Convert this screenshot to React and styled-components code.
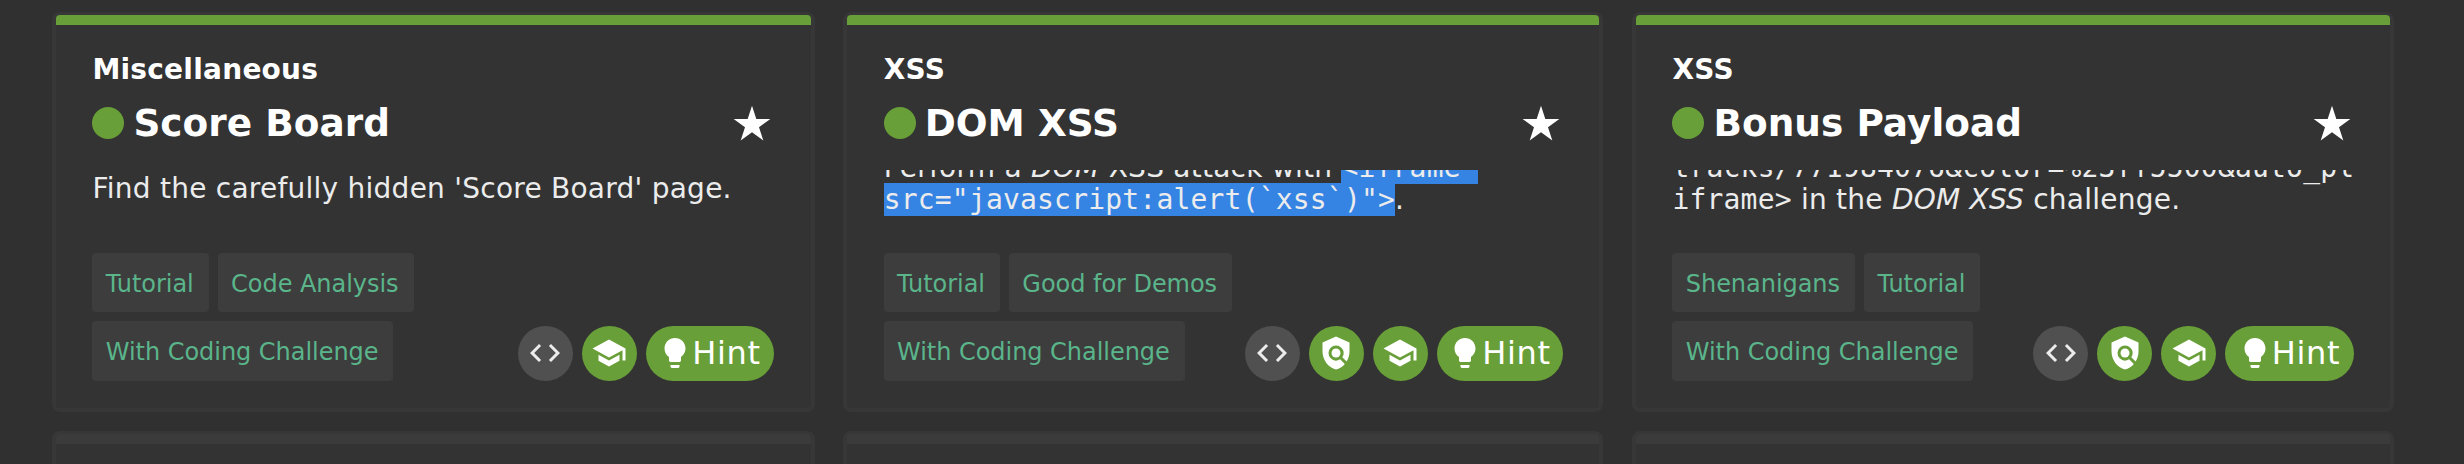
import React from "react";
import styled, { createGlobalStyle } from "styled-components";
import { MdCode, MdLightbulb, MdPolicy, MdSchool } from "react-icons/md";

const GlobalStyle = createGlobalStyle`
  * { box-sizing: border-box; }
  body {
    margin: 0;
    height: 464px;
    overflow: hidden;
    background: #303030;
    color: #fff;
    font-family: "DejaVu Sans", sans-serif;
  }
`;

const Grid = styled.main`
  display: grid;
  grid-template-columns: 762.5px 760px 762px;
  grid-template-rows: 400px 400px;
  column-gap: 28.75px;
  row-gap: 19px;
  padding: 12px 0 0 52px;
  height: 464px;
  overflow: hidden;
`;

const Card = styled.article`
  display: flex;
  flex-direction: column;
  border: 4px solid #373737;
  border-top-width: 3px;
  border-radius: 8px;
  background: #333;
`;

const StatusBar = styled.div`
  flex: none;
  height: ${(p) => (p.$solved ? "9.5px" : "10px")};
  border-radius: 4px 4px 0 0;
  background: ${(p) => (p.$solved ? "#689f38" : "#3b3b3b")};
`;

const Content = styled.div`
  display: flex;
  flex-direction: column;
  flex: 1;
  padding: 28.5px 36.3px 27.5px 36.4px;
`;

const Category = styled.div`
  height: 33px;
  font-size: 28px;
  font-weight: 700;
  line-height: 33px;
  letter-spacing: 0.25px;
`;

const TitleRow = styled.div`
  display: flex;
  align-items: center;
  gap: 9px;
  height: 44px;
  margin-top: 15px;
`;

const Dot = styled.span`
  width: 32px;
  height: 32px;
  border-radius: 50%;
  background: #689f38;
`;

const Title = styled.h2`
  flex: 1;
  margin: 0;
  font-size: 37.4px;
  line-height: 44px;
  letter-spacing: 0.05px;
`;

const Star = styled.svg`
  width: 44px;
  height: 44px;
  margin-top: 1px;
  fill: #fff;
`;

const Description = styled.div`
  display: flex;
  flex-direction: column;
  justify-content: ${(p) => (p.$scrolled ? "flex-end" : "flex-start")};
  height: 46px;
  margin-top: 25px;
  padding-top: ${(p) => (p.$scrolled ? 0 : "3px")};
  overflow: hidden;
  color: #ececec;
  font-size: 28px;
  line-height: 32px;
  letter-spacing: 0.25px;
  white-space: nowrap;
`;

const Line = styled.div`
  flex: none;
  height: 32px;
`;

const Code = styled.code`
  font-family: "DejaVu Sans Mono", monospace;
  font-size: 28px;
  letter-spacing: 0.19px;
`;

const Selected = styled(Code)`
  background: #3584e4;
`;

const Footer = styled.div`
  display: flex;
  align-items: flex-end;
  justify-content: space-between;
  margin-top: auto;
`;

const Tags = styled.div`
  display: flex;
  flex-wrap: wrap;
  gap: 9px;
  width: 365px;
`;

const Tag = styled.span`
  height: 59.5px;
  padding: 0 15px 0 13.4px;
  border-radius: 4px;
  background: #3d3d3d;
  color: #5ab58b;
  font-size: 24px;
  line-height: 62px;
  letter-spacing: -0.04px;
  white-space: nowrap;
`;

const Badges = styled.div`
  display: flex;
  gap: 9px;
`;

const Badge = styled.span`
  display: flex;
  align-items: center;
  justify-content: center;
  width: 55px;
  height: 55px;
  border-radius: 28px;
  background: ${(p) => (p.$muted ? "#505050" : "#689f38")};
  color: ${(p) => (p.$muted ? "#ececec" : "#fff")};
`;

const HintBadge = styled(Badge)`
  width: ${(p) => p.$width}px;
  padding-right: 2px;
  font-size: 32px;
  letter-spacing: 0.7px;

  svg {
    flex: none;
    margin-right: -1px;
  }
`;

const cards = [
  {
    category: "Miscellaneous",
    title: "Score Board",
    tags: ["Tutorial", "Code Analysis", "With Coding Challenge"],
    hintWidth: 128.5,
    description: <Line>Find the carefully hidden 'Score Board' page.</Line>,
  },
  {
    category: "XSS",
    title: "DOM XSS",
    tags: ["Tutorial", "Good for Demos", "With Coding Challenge"],
    policy: true,
    scrolled: true,
    hintWidth: 126,
    description: (
      <>
        <Line>
          Perform a <em>DOM</em> XSS attack with <Selected>&lt;iframe&nbsp;</Selected>
        </Line>
        <Line>
          <Selected>src="javascript:alert(`xss`)"&gt;</Selected>.
        </Line>
      </>
    ),
  },
  {
    category: "XSS",
    title: "Bonus Payload",
    tags: ["Shenanigans", "Tutorial", "With Coding Challenge"],
    policy: true,
    scrolled: true,
    hintWidth: 128.5,
    description: (
      <>
        <Line>
          <Code>tracks/771984076&amp;color=%23ff5500&amp;auto_pl</Code>
        </Line>
        <Line>
          <Code>iframe&gt;</Code> in the <em>DOM XSS</em> challenge.
        </Line>
      </>
    ),
  },
];

function ChallengeCard({ card }) {
  return (
    <Card>
      <StatusBar $solved />
      <Content>
        <Category>{card.category}</Category>
        <TitleRow>
          <Dot />
          <Title>{card.title}</Title>
          <Star viewBox="0 0 24 24">
            <path d="M12 2l2.36 7.26H22l-6.18 4.49L18.18 21 12 16.53 5.82 21l2.36-7.25L2 9.26h7.64z" />
          </Star>
        </TitleRow>
        <Description $scrolled={card.scrolled}>{card.description}</Description>
        <Footer>
          <Tags>
            {card.tags.map((tag) => (
              <Tag key={tag}>{tag}</Tag>
            ))}
          </Tags>
          <Badges>
            <Badge $muted>
              <MdCode size={36} />
            </Badge>
            {card.policy && (
              <Badge>
                <MdPolicy size={36} />
              </Badge>
            )}
            <Badge>
              <MdSchool size={36} />
            </Badge>
            <HintBadge $width={card.hintWidth}>
              <MdLightbulb size={36} />
              Hint
            </HintBadge>
          </Badges>
        </Footer>
      </Content>
    </Card>
  );
}

export default function App() {
  return (
    <>
      <GlobalStyle />
      <Grid>
        {cards.map((card) => (
          <ChallengeCard key={card.title} card={card} />
        ))}
        {cards.map((card) => (
          <Card key={`next-${card.title}`}>
            <StatusBar />
          </Card>
        ))}
      </Grid>
    </>
  );
}
